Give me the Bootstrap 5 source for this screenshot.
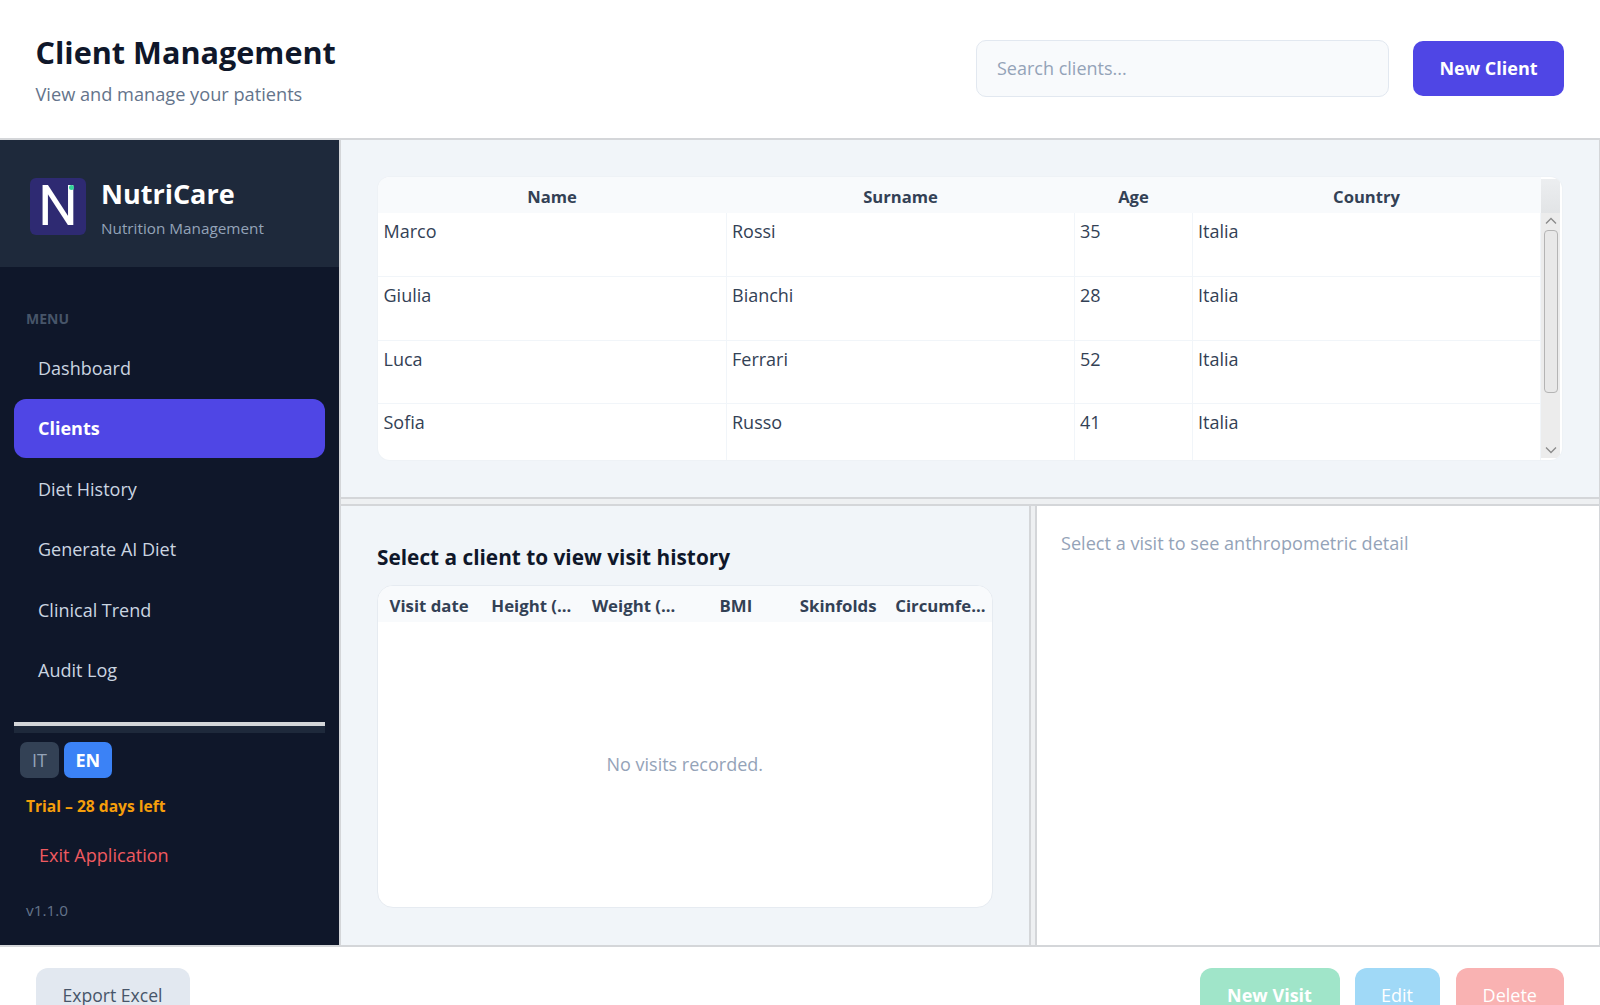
<!DOCTYPE html>
<html lang="en">

<head>
    <meta charset="UTF-8">
    <meta name="viewport" content="width=device-width, initial-scale=1.0">
    <title>Client Management - NutriCare</title>
    <link href="https://cdn.jsdelivr.net/npm/bootstrap@5.3.0/dist/css/bootstrap.min.css" rel="stylesheet">
    <style>
        html, body {
            height: 1005px;
            overflow: hidden;
        }

        body {
            font-family: "Open Sans", "Noto Sans", sans-serif;
            background-color: #fff;
            font-size: 18px;
        }

        /* top header */
        .top-head {
            height: 138px;
            padding: 0 36px 0 35.500px;
        }

        .top-head h1 {
            font-size: 30.6px;
            font-weight: 700;
            color: #0f172a;
            margin: 1px 0 12px;
            line-height: 36px;
        }

        .top-head p {
            font-size: 18.2px;
            color: #64748b;
            margin: 0;
            line-height: 24px;
        }

        .head-tools {
            margin-bottom: 2px;
        }

        .search-box {
            width: 413px;
            height: 57px;
            background: #f8fafc;
            border: 1px solid #e2e8f0;
            border-radius: 10px;
            padding: 0 20px;
            font-size: 18px;
            color: #0f172a;
        }

        .search-box::placeholder {
            color: #94a3b8;
        }

        .btn-new-client {
            width: 151px;
            height: 55px;
            margin-left: 24px;
            background: #4f46e5;
            color: #fff;
            font-weight: 700;
            font-size: 18px;
            border-radius: 10px;
            border: 0;
        }

        /* body */
        .app-main {
            height: 809px;
            border-top: 2px solid #d4d6d9;
            border-bottom: 2px solid #d4d6d9;
            border-right: 1px solid #d4d6d9;
        }

        .side-bar {
            width: 341px;
            flex: none;
            background: #0f172a;
            color: #fff;
            border-right: 2px solid #d4d6d9;
        }

        .brand-area {
            height: 127px;
            background: #1e293b;
            padding: 6px 30px 0;
            gap: 15px;
        }

        .brand-logo {
            position: relative;
            width: 56px;
            height: 57px;
            background: #2e2a72;
            border-radius: 6px;
            flex: none;
            font-family: Roboto, sans-serif;
            font-size: 56px;
            line-height: 57px;
            text-align: center;
            color: #fff;
        }

        .brand-dot {
            position: absolute;
            top: 7px;
            right: 12px;
            width: 5px;
            height: 5px;
            border-radius: 50%;
            background: #34d399;
        }

        .brand-text {
            margin-top: 2px;
        }

        .brand-name {
            font-size: 27px;
            font-weight: 700;
            line-height: 34px;
        }

        .brand-sub {
            font-size: 15.3px;
            color: #94a3b8;
            line-height: 22px;
            margin-top: 6px;
        }

        .menu-label {
            font-size: 14px;
            font-weight: 700;
            color: #475569;
            padding: 42px 26px 0;
            line-height: 20px;
        }

        .menu-list {
            padding: 9.500px 14.500px 0 14px;
        }

        .menu-item {
            display: block;
            height: 59px;
            line-height: 59px;
            margin-bottom: 1.600px;
            padding-left: 24px;
            font-size: 18px;
            color: #cbd5e1;
            border-radius: 12px;
            text-decoration: none;
        }

        .menu-item.is-active {
            background: #4f46e5;
            color: #fff;
            font-weight: 700;
        }

        .side-rule {
            margin: 22px 14.500px 0 14px;
            height: 11px;
            background: #1e293b;
            border-top: 4px solid #d4d6d9;
        }

        .lang-row {
            padding: 9px 20px 0;
            gap: 5px;
        }

        .lang-btn {
            height: 36px;
            border-radius: 7px;
            font-size: 18px;
            line-height: 36px;
            text-align: center;
        }

        .lang-it {
            width: 39px;
            background: #334155;
            color: #94a3b8;
        }

        .lang-en {
            width: 47.500px;
            background: #3b82f6;
            color: #fff;
            font-weight: 700;
        }

        .trial-note {
            color: #f59e0b;
            font-size: 15.6px;
            font-weight: 700;
            padding: 17px 26px 0;
            line-height: 22px;
        }

        .exit-link {
            color: #ef5a60;
            font-size: 18.1px;
            padding: 24px 39px 0;
            line-height: 28px;
        }

        .version-note {
            color: #64748b;
            font-size: 15.3px;
            padding: 30px 26px 0;
            line-height: 22px;
        }

        .work-area {
            min-width: 0;
        }

        .clients-pane {
            height: 357px;
            flex: none;
            background: #f1f5f9;
            padding: 37px 37px 37px 36.500px;
        }

        .split-h {
            height: 9px;
            flex: none;
            background: #eef0f2;
            border-top: 2px solid #d4d6d9;
            border-bottom: 2px solid #d4d6d9;
        }

        .split-v {
            width: 8px;
            flex: none;
            background: #eef0f2;
            border-left: 2px solid #d4d6d9;
            border-right: 2px solid #d4d6d9;
        }

        .clients-card {
            height: 283px;
            background: #fff;
            border-radius: 12px;
            box-shadow: 0 0 0 1px #eef2f6;
            overflow: hidden;
        }

        .clients-table {
            table-layout: fixed;
            width: 1163.500px;
            flex: none;
            border-collapse: collapse;
            margin: 0;
            align-self: flex-start;
        }

        .clients-table th {
            height: 36px;
            background: #f8fafc;
            color: #334155;
            font-size: 16.6px;
            font-weight: 700;
            text-align: center;
            padding: 5px 0 0;
        }

        .clients-table td {
            height: 63.600px;
            vertical-align: top;
            padding: 6px 6px 6px 5px;
            font-size: 18px;
            line-height: 24px;
            color: #334155;
            border-bottom: 1px solid #f1f5f9;
            border-right: 1px solid #f1f5f9;
        }

        .clients-table td:first-child {
            padding-left: 6px;
        }

        .fake-scroll {
            width: 19px;
            flex: none;
            margin: 2px 2px 2px 0;
            background: #ececec;
        }

        .scroll-top {
            height: 34px;
            background: linear-gradient(#eceef0, #e2e4e6);
        }

        .scroll-btn {
            height: 16px;
            color: #8a8a8a;
        }

        .scroll-thumb {
            height: 163px;
            margin: 1px 2px 0 3px;
            background: #e8e8e8;
            border: 1px solid #b4b4b4;
            border-radius: 4px;
        }

        .visits-pane {
            width: 688px;
            flex: none;
            background: #f1f5f9;
            padding: 37px 36.500px 36px 36px;
        }

        .visits-pane h2 {
            font-size: 20.8px;
            font-weight: 700;
            color: #0f172a;
            line-height: 28px;
            margin: 0 0 14px;
        }

        .visits-card {
            height: 323px;
            background: #fff;
            border: 1px solid #e6ebf1;
            border-radius: 16px;
            overflow: hidden;
        }

        .visits-head {
            height: 36px;
            flex: none;
            background: #f8fafc;
            color: #334155;
            font-size: 16.8px;
            font-weight: 700;
        }

        .visits-head span {
            flex: 1 1 0;
            text-align: center;
            white-space: nowrap;
            line-height: 40px;
        }

        .visits-empty {
            color: #94a3b8;
            font-size: 18px;
        }

        .detail-pane {
            background: #fff;
            color: #94a3b8;
            font-size: 18.1px;
            padding: 23px 24px;
            line-height: 28px;
        }

        /* footer */
        .app-foot {
            padding: 21px 36px 0 35.500px;
        }

        .foot-btn {
            height: 54px;
            border-radius: 12px;
            border: 0;
            font-size: 18px;
            color: #fff;
        }

        .foot-export {
            width: 154px;
            font-size: 17.6px;
            background: #e2e8f0;
            color: #475569;
        }

        .foot-visit {
            width: 140px;
            background: #a0e5c9;
            font-weight: 700;
        }

        .foot-edit {
            width: 85px;
            background: #a0d9f7;
        }

        .foot-delete {
            width: 108.500px;
            margin-left: 1px;
            background: #f9b2b2;
        }

        .foot-actions {
            gap: 15px;
        }
    </style>
</head>

<body>
    <!-- Header -->
    <header class="top-head d-flex align-items-center justify-content-between">
        <div>
            <h1>Client Management</h1>
            <p>View and manage your patients</p>
        </div>
        <div class="head-tools d-flex align-items-center">
            <input class="search-box" type="text" placeholder="Search clients...">
            <button class="btn-new-client" type="button">New Client</button>
        </div>
    </header>

    <div class="app-main d-flex">
        <!-- Sidebar -->
        <aside class="side-bar">
            <div class="brand-area d-flex align-items-center">
                <div class="brand-logo">N<span class="brand-dot"></span></div>
                <div class="brand-text">
                    <div class="brand-name">NutriCare</div>
                    <div class="brand-sub">Nutrition Management</div>
                </div>
            </div>
            <div class="menu-label">MENU</div>
            <nav class="menu-list">
                <a class="menu-item" href="#">Dashboard</a>
                <a class="menu-item is-active" href="#">Clients</a>
                <a class="menu-item" href="#">Diet History</a>
                <a class="menu-item" href="#">Generate AI Diet</a>
                <a class="menu-item" href="#">Clinical Trend</a>
                <a class="menu-item" href="#">Audit Log</a>
            </nav>
            <div class="side-rule"></div>
            <div class="lang-row d-flex">
                <div class="lang-btn lang-it">IT</div>
                <div class="lang-btn lang-en">EN</div>
            </div>
            <div class="trial-note">Trial – 28 days left</div>
            <div class="exit-link">Exit Application</div>
            <div class="version-note">v1.1.0</div>
        </aside>

        <div class="work-area flex-grow-1 d-flex flex-column">
            <!-- Clients table -->
            <section class="clients-pane">
                <div class="clients-card d-flex">
                    <table class="clients-table">
                        <colgroup>
                            <col width="349">
                            <col width="348">
                            <col width="118">
                            <col width="348">
                        </colgroup>
                        <thead>
                            <tr><th>Name</th><th>Surname</th><th>Age</th><th>Country</th></tr>
                        </thead>
                        <tbody>
                            <tr><td>Marco</td><td>Rossi</td><td>35</td><td>Italia</td></tr>
                            <tr><td>Giulia</td><td>Bianchi</td><td>28</td><td>Italia</td></tr>
                            <tr><td>Luca</td><td>Ferrari</td><td>52</td><td>Italia</td></tr>
                            <tr><td>Sofia</td><td>Russo</td><td>41</td><td>Italia</td></tr>
                        </tbody>
                    </table>
                    <div class="fake-scroll d-flex flex-column">
                        <div class="scroll-top"></div>
                        <div class="scroll-btn d-flex align-items-center justify-content-center">
                            <svg width="12" height="8" viewBox="0 0 12 8"><path d="M1 6.500 6 1.500l5 5" fill="none" stroke="currentColor" stroke-width="1.300" /></svg>
                        </div>
                        <div class="scroll-thumb"></div>
                        <div class="flex-grow-1"></div>
                        <div class="scroll-btn d-flex align-items-center justify-content-center">
                            <svg width="12" height="8" viewBox="0 0 12 8"><path d="M1 1.500 6 6.500l5-5" fill="none" stroke="currentColor" stroke-width="1.300" /></svg>
                        </div>
                    </div>
                </div>
            </section>

            <div class="split-h"></div>

            <div class="d-flex flex-grow-1">
                <!-- Visits -->
                <section class="visits-pane">
                    <h2>Select a client to view visit history</h2>
                    <div class="visits-card d-flex flex-column">
                        <div class="visits-head d-flex">
                            <span>Visit date</span>
                            <span>Height (...</span>
                            <span>Weight (...</span>
                            <span>BMI</span>
                            <span>Skinfolds</span>
                            <span>Circumfe...</span>
                        </div>
                        <div class="visits-empty flex-grow-1 d-flex align-items-center justify-content-center">No visits recorded.</div>
                    </div>
                </section>
                <div class="split-v"></div>
                <!-- Detail -->
                <section class="detail-pane flex-grow-1">Select a visit to see anthropometric detail</section>
            </div>
        </div>
    </div>

    <!-- Footer -->
    <footer class="app-foot d-flex justify-content-between">
        <button class="foot-btn foot-export" type="button">Export Excel</button>
        <div class="foot-actions d-flex">
            <button class="foot-btn foot-visit" type="button">New Visit</button>
            <button class="foot-btn foot-edit" type="button">Edit</button>
            <button class="foot-btn foot-delete" type="button">Delete</button>
        </div>
    </footer>

    <script src="https://cdn.jsdelivr.net/npm/bootstrap@5.3.0/dist/js/bootstrap.bundle.min.js"></script>
</body>

</html>
